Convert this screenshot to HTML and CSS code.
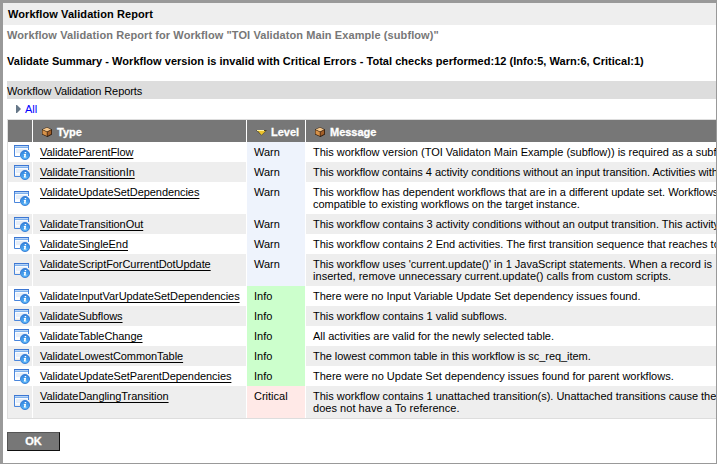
FILE: index.html
```html
<!DOCTYPE html>
<html lang="en">
<head>
<meta charset="utf-8">
<title>Workflow Validation Report</title>
<link rel="stylesheet" href="styles.css">
</head>
<body>
<svg class="defs" width="0" height="0" aria-hidden="true">
  <defs>
    <linearGradient id="blue" x1="0" y1="0" x2="0" y2="1"><stop offset="0" stop-color="#2f7fdc"/><stop offset="1" stop-color="#55b4f7"/></linearGradient>
    <symbol id="record" viewBox="0 0 16 16">
      <path d="M.5 1.5h14v9H.5z" fill="#fafcff"/>
      <path d="M2 5h11v4H2z" fill="#e6eef8"/>
      <path d="M0 1h15v3H0z" fill="#b5d4f7"/>
      <path d="M0 1.5h15" fill="none" stroke="#3c76d2"/>
      <path d="M.5 2v10.5H6M14.500 2v4" fill="none" stroke="#4a86dc"/>
      <path d="M1 3.500h13" stroke="#7fb0ec"/>
      <circle cx="11" cy="11" r="4.600" fill="url(#blue)" stroke="#2f72d0" stroke-width=".8"/>
      <path d="M10.700 8h1.500v1.300h-1.500zM9.900 10h2.200l-.5 2.700h.8v.9H9.700l.6-2.700h-.6z" fill="#fff"/>
    </symbol>
    <symbol id="cube" viewBox="0 0 12 12">
      <path d="M6 1l5 2.5v5L6.500 11 1 8.500v-5z" fill="#2c1a0c"/>
      <path d="M6 1.500l4 2-4 2-4.300-2z" fill="#f2c58b"/>
      <path d="M1.500 4l4.300 2v4L1.500 8z" fill="#d79249"/>
      <path d="M6.500 6l3.700-2v4l-3.700 2z" fill="#a35f28"/>
    </symbol>
  </defs>
</svg>
<div class="window">
  <h1 class="title"><span>Workflow Validation Report</span></h1>
  <div class="content">
    <p class="subtitle">Workflow Validation Report for Workflow "TOI Validaton Main Example (subflow)"</p>
    <p class="summary">Validate Summary - Workflow version is invalid with Critical Errors - Total checks performed:12 (Info:5, Warn:6, Critical:1)</p>
    <div class="section"><span>Workflow Validation Reports</span></div>
    <div class="crumb"><svg width="5" height="8" viewBox="0 0 5 8"><path d="M0 0h1l4 4-4 4H0z" fill="#667788"/></svg><a>All</a></div>
    <div class="table">
      <div class="row head"><div></div><div><svg class="cube"><use href="#cube"/></svg><span>Type</span></div><div><svg class="sort" viewBox="0 0 11 6"><path d="M0 0h11L5.500 5.500z" fill="#4d4320"/><path d="M2 1h7.500L5.500 5z" fill="#edc32c"/><path d="M1 .500h7" stroke="#fff2a0"/></svg><span>Level</span></div><div><svg class="cube"><use href="#cube"/></svg><span>Message</span></div></div>
      <div class="row"><div><svg class="rec"><use href="#record"/></svg></div><div><a>ValidateParentFlow</a></div><div class="warn">Warn</div><div>This workflow version (TOI Validaton Main Example (subflow)) is required as a subf</div></div>
      <div class="row alt"><div><svg class="rec"><use href="#record"/></svg></div><div><a>ValidateTransitionIn</a></div><div class="warn">Warn</div><div class="snug">This workflow contains 4 activity conditions without an input transition. Activities with</div></div>
      <div class="row tall"><div><svg class="rec"><use href="#record"/></svg></div><div><a>ValidateUpdateSetDependencies</a></div><div class="warn">Warn</div><div class="snug">This workflow has dependent workflows that are in a different update set. Workflows<br>compatible to existing workflows on the target instance.</div></div>
      <div class="row alt"><div><svg class="rec"><use href="#record"/></svg></div><div><a>ValidateTransitionOut</a></div><div class="warn">Warn</div><div>This workflow contains 3 activity conditions without an output transition. This activity</div></div>
      <div class="row"><div><svg class="rec"><use href="#record"/></svg></div><div><a>ValidateSingleEnd</a></div><div class="warn">Warn</div><div>This workflow contains 2 End activities. The first transition sequence that reaches to</div></div>
      <div class="row alt tall"><div><svg class="rec"><use href="#record"/></svg></div><div><a>ValidateScriptForCurrentDotUpdate</a></div><div class="warn">Warn</div><div>This workflow uses 'current.update()' in 1 JavaScript statements. When a record is<br><span class="loose">inserted, remove unnecessary current.update() calls from custom scripts.</span></div></div>
      <div class="row"><div><svg class="rec"><use href="#record"/></svg></div><div><a>ValidateInputVarUpdateSetDependencies</a></div><div class="info">Info</div><div class="snug">There were no Input Variable Update Set dependency issues found.</div></div>
      <div class="row alt"><div><svg class="rec"><use href="#record"/></svg></div><div><a>ValidateSubflows</a></div><div class="info">Info</div><div>This workflow contains 1 valid subflows.</div></div>
      <div class="row"><div><svg class="rec"><use href="#record"/></svg></div><div><a>ValidateTableChange</a></div><div class="info">Info</div><div>All activities are valid for the newly selected table.</div></div>
      <div class="row alt"><div><svg class="rec"><use href="#record"/></svg></div><div><a>ValidateLowestCommonTable</a></div><div class="info">Info</div><div class="snug">The lowest common table in this workflow is sc_req_item.</div></div>
      <div class="row"><div><svg class="rec"><use href="#record"/></svg></div><div><a>ValidateUpdateSetParentDependencies</a></div><div class="info">Info</div><div>There were no Update Set dependency issues found for parent workflows.</div></div>
      <div class="row alt tall"><div><svg class="rec"><use href="#record"/></svg></div><div><a>ValidateDanglingTransition</a></div><div class="critical">Critical</div><div>This workflow contains 1 unattached transition(s). Unattached transitions cause the<br><span class="loose">does not have a To reference.</span></div></div>
    </div>
    <button class="ok">OK</button>
  </div>
</div>
</body>
</html>
```
FILE: styles.css
```css
* { box-sizing: border-box; }
body {
  margin: 0;
  overflow: hidden;
  font: 11px/12px "Liberation Sans", Arial, sans-serif;
  color: #000;
  white-space: nowrap;
}
.defs { position: absolute; }
svg { display: block; flex: none; }
.window {
  height: 464px;
  border: solid #999;
  border-width: 3px 1px 1px 3px;
  background: #fff;
  overflow: hidden;
}
.title {
  margin: 0;
  height: 22px;
  padding: 5px 5px 0;
  background: #eee;
  font-size: 11px;
  line-height: 12px;
  letter-spacing: .08px;
}
.content { padding-left: 4px; }
.subtitle, .summary { margin: 0; height: 12px; font-weight: bold; }
.subtitle { margin-top: 4px; color: #777; letter-spacing: .09px; }
.summary { margin-top: 14px; letter-spacing: .03px; }
.section {
  margin-top: 14px;
  height: 18px;
  padding-top: 4px;
  background: #ddd;
  letter-spacing: -.07px;
}
.crumb {
  display: flex;
  align-items: center;
  gap: 4px;
  height: 20px;
  padding-left: 9px;
  color: #00f;
}
.table {
  border: solid #ddd;
  border-width: 1px 0 1px 1px;
}
.row {
  display: grid;
  grid-template-columns: 24px 213px 58px 1fr;
  column-gap: 1px;
  height: 20px;
  background: linear-gradient(to right, transparent 24px, #fff 24px 25px, transparent 25px 238px, #fff 238px 239px, transparent 239px 297px, #fff 297px 298px, transparent 298px);
}
.row > div { padding: 4px 0 0 7px; overflow: hidden; min-width: 0; }
.row > div:first-child { display: flex; align-items: center; padding: 0 0 0 6px; overflow: visible; }
.row > div:last-child { overflow: visible; letter-spacing: -.01px; }
.row > .snug:last-child { letter-spacing: -.04px; }
.loose { letter-spacing: .04px; }
.alt { background-color: #eee; }
.tall { height: 32px; }
.row a { text-decoration: underline; text-underline-offset: 2px; text-decoration-thickness: 1px; text-decoration-skip-ink: none; letter-spacing: -.065px; }
.rec { width: 16px; height: 16px; }
.row.head { height: 22px; background-color: #777; color: #fff; font-weight: bold; }
.row.head > div { display: flex; align-items: center; padding: 1px 0 0 7px; }
.row.head span { -webkit-text-stroke: .3px #fff; }
.cube { width: 12px; height: 12px; margin: 1px 4px 0 1px; }
.sort { width: 11px; height: 6px; margin: 3px 4px 0 2px; }
.warn { background: #eef3fc; }
.info { background: #ccffcc; }
.critical { background: #ffe9e7; }
.ok {
  display: block;
  width: 53px;
  height: 19px;
  margin-top: 13px;
  padding: 0;
  border: 1px solid;
  border-color: #555 #111 #111 #555;
  background: #777;
  color: #fff;
  font: bold 11px/17px "Liberation Sans", Arial, sans-serif;
  -webkit-text-stroke: .3px #fff;
}
```
